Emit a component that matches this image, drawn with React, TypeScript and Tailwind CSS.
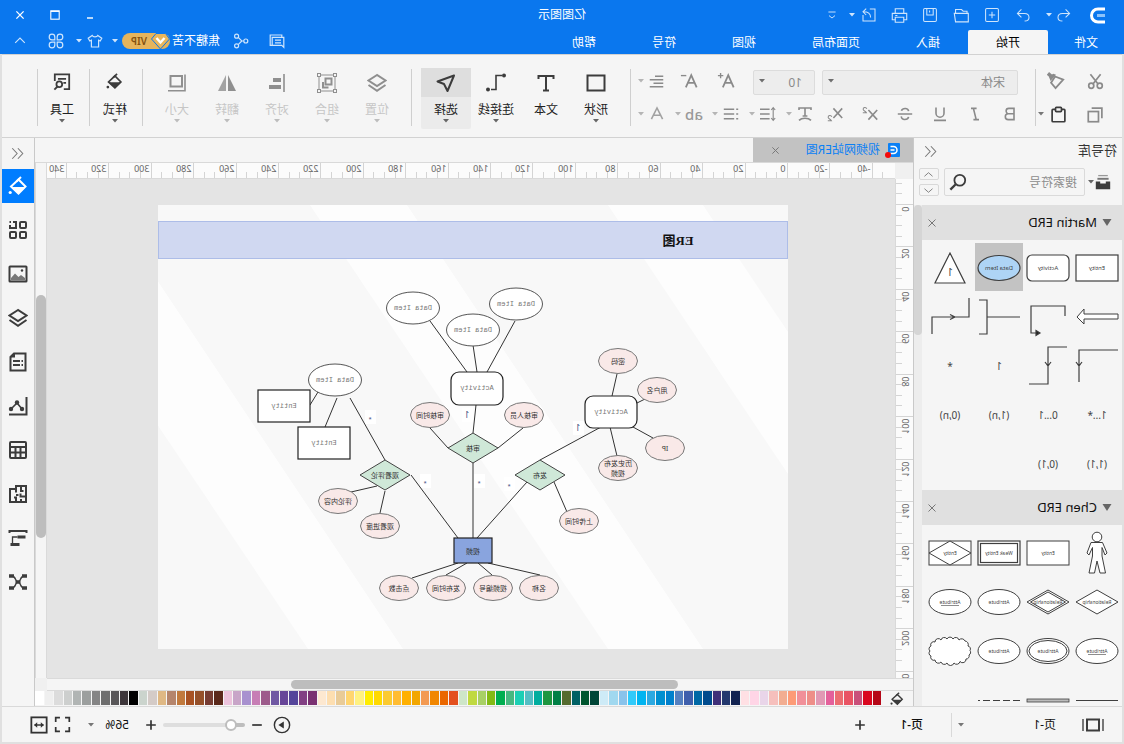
import { useState } from 'react';
import type { ReactNode } from 'react';
import clsx from 'clsx';

/* ---------- small helpers ---------- */

function Ico({ size = 20, sw = 2, className, children }: { size?: number; sw?: number; className?: string; children: ReactNode }) {
  return (
    <svg
      width={size}
      height={size}
      viewBox="0 0 20 20"
      fill="none"
      stroke="currentColor"
      strokeWidth={sw}
      className={clsx('shrink-0', className)}
      aria-hidden="true"
    >
      {children}
    </svg>
  );
}

function Caret({ className }: { className?: string }) {
  return (
    <svg width="6" height="4" viewBox="0 0 6 4" className={clsx('shrink-0', className)} aria-hidden="true">
      <path d="M0 0H6L3 3.6Z" fill="currentColor" />
    </svg>
  );
}

function IconButton({ label, className, children }: { label: string; className?: string; children: ReactNode }) {
  return (
    <button type="button" aria-label={label} className={clsx('flex shrink-0 items-center justify-center', className)}>
      {children}
    </button>
  );
}

const Divider = ({ className }: { className?: string }) => (
  <div className={clsx('mt-[14px] h-[57px] w-px shrink-0 bg-[#cfcfcf]', className)} />
);

const bucket = (
  <>
    <path d="M9.5 3.5L17 10.5L9.5 17.5L2.5 10.5Z" />
    <path d="M2.5 11H17L9.5 18Z" fill="currentColor" stroke="none" />
    <path d="M7 1L11.5 5.5" />
    <circle cx="17.8" cy="16.5" r="1.6" fill="currentColor" stroke="none" />
  </>
);

const layers = (
  <>
    <path d="M10 2L18.5 7.5L10 13L1.5 7.5Z" />
    <path d="M1.5 12L10 17.8L18.5 12" />
  </>
);

/* ---------- title bar ---------- */

const tabs = ['插入', '页面布局', '视图', '符号', '帮助'];

function TitleBar() {
  return (
    <header className="shrink-0 bg-[#0a77ee] text-white">
      <div className="grid h-[30px] grid-cols-[1fr_auto_1fr] items-center">
        <div className="flex items-center pl-[19px] text-[#cfe5fc]">
          <svg width="15" height="17" viewBox="0 0 15 17" fill="none" aria-hidden="true">
            <path d="M0 2H7A6.5 6.5 0 0 1 7 15H0" stroke="#fff" strokeWidth="3" />
            <path d="M0 8.5H8" stroke="#8cc2fa" strokeWidth="3" />
          </svg>
          <IconButton label="撤销" className="ml-[14px] w-6">
            <Ico size={16} sw={1.3}><path d="M8 3L3 8L8 13M3 8H12C16 8 17.5 10.5 17.5 13C17.5 16 15 17.5 12 17.5" /></Ico>
          </IconButton>
          <Caret />
          <IconButton label="重做" className="ml-[11px] w-6">
            <Ico size={16} sw={1.3}><path d="M12 3L17 8L12 13M17 8H8C4 8 2.5 10.5 2.5 13C2.5 16 5 17.5 8 17.5" /></Ico>
          </IconButton>
          <IconButton label="新建" className="ml-[3px] w-[31px]">
            <Ico size={16} sw={1.3}><rect x="2" y="2" width="16" height="16" rx="1.5" /><path d="M10 6V14M6 10H14" /></Ico>
          </IconButton>
          <IconButton label="打开" className="w-[31px]">
            <Ico size={17} sw={1.3}><path d="M2 7.500H16.500L18.500 7.500L17 17.500H2ZM3.500 7.500V5H8L10 3H17V7.500" /></Ico>
          </IconButton>
          <IconButton label="保存" className="w-[31px]">
            <Ico size={16} sw={1.3}><rect x="2" y="2" width="16" height="16" rx="1.5" /><path d="M6 2V10H14V2M10.5 4.5V7" /></Ico>
          </IconButton>
          <IconButton label="打印" className="w-[31px]">
            <Ico size={17} sw={1.3}><path d="M5 7V2H15V7M5 15H1.5V7.5H18.5V15H15" /><path d="M5 12H15V18H5ZM12.5 10H15" /></Ico>
          </IconButton>
          <IconButton label="导出" className="w-[29px]">
            <Ico size={16} sw={1.3}><path d="M9 2.5H2.5V17.5H17.5V10M8 13C8 8 11 6 17 6M13.5 2L17.5 6L13.5 10" /></Ico>
          </IconButton>
          <Caret />
          <IconButton label="自定义" className="ml-[5px] w-6">
            <Ico size={12} sw={1.6}><path d="M4 5H16M5 11L10 15L15 11" /></Ico>
          </IconButton>
        </div>
        <h1 className="text-xs">亿图图示</h1>
        <div className="flex justify-end pr-[3px]">
          <IconButton label="最小化" className="h-[30px] w-[35px]">
            <Ico size={12} sw={2.4}><path d="M5 15H15" /></Ico>
          </IconButton>
          <IconButton label="最大化" className="h-[30px] w-[35px]">
            <Ico size={12} sw={1.8}><rect x="3" y="3" width="14" height="14" /><path d="M3 4H17" /></Ico>
          </IconButton>
          <IconButton label="关闭" className="h-[30px] w-[35px]">
            <Ico size={12} sw={2.2}><path d="M4 4L16 16M16 4L4 16" /></Ico>
          </IconButton>
        </div>
      </div>

      <div className="flex h-6 items-stretch text-xs">
        <button type="button" className="w-[76px] pt-px">文件</button>
        <button type="button" className="w-20 rounded-t-xs bg-[#f5f5f5] pt-px text-black">开始</button>
        {tabs.map(t => (
          <button key={t} type="button" className="px-7 pt-px whitespace-nowrap">{t}</button>
        ))}
        <div className="ml-auto flex items-center pr-[3px] pb-[2px] text-[#cfe5fc]">
          <IconButton label="消息" className="w-9">
            <Ico size={16} sw={1.5}><path d="M4 5V2.5H18.5V15.500H16.500M1.5 5.500V18L4 15.5H16V5.5ZM5 9H12.500M5 12.3H12.500" /></Ico>
          </IconButton>
          <IconButton label="分享" className="mr-[3px] w-9">
            <Ico size={16} sw={1.5}><circle cx="4" cy="10" r="2.5" /><circle cx="15.5" cy="4" r="2.5" /><circle cx="15.5" cy="16" r="2.5" /><path d="M6.5 10H9L13.5 5.5M9 10L13.5 14.5" /></Ico>
          </IconButton>
          <span className="mr-[2px] text-white">焦糖不苦</span>
          <span className="mr-1 flex h-4 w-12 items-center rounded-full bg-[#e5b45c]">
            <svg width="19" height="16" viewBox="0 0 19 16" aria-hidden="true">
              <path d="M4.5 0.5H14L18.5 6L9.5 16L0.5 6Z" fill="#e9b65b" stroke="#0a77ee" />
              <path d="M5.5 5L9.5 9.5L13.5 5" fill="none" stroke="#fff" strokeWidth="2.4" />
            </svg>
            <span className="ml-1 text-[10px] leading-none font-semibold text-[#84520f]">VIP</span>
          </span>
          <Caret className="mr-1" />
          <IconButton label="皮肤" className="w-[26px]">
            <Ico size={16} sw={1.5}><path d="M6.5 3L1.5 6.5L3.5 10L5.5 9V17.5H14.5V9L16.5 10L18.5 6.5L13.5 3C12.5 5.5 7.5 5.5 6.5 3Z" /></Ico>
          </IconButton>
          <Caret className="mr-[2px]" />
          <IconButton label="应用" className="w-9">
            <Ico size={16} sw={1.5}>
              <path d="M8.5 8.5V5A3.5 3.5 0 1 0 5 8.5ZM11.5 8.5V5A3.5 3.5 0 1 1 15 8.5ZM8.5 11.5V15A3.5 3.5 0 1 1 5 11.5ZM11.5 11.5V15A3.5 3.5 0 1 0 15 11.5Z" />
            </Ico>
          </IconButton>
          <IconButton label="收起功能区" className="w-[35px]">
            <Ico size={12} sw={1.8}><path d="M2 13L10 5L18 13" /></Ico>
          </IconButton>
        </div>
      </div>
    </header>
  );
}

/* ---------- ribbon ---------- */

interface Tool {
  label: string;
  icon: ReactNode;
  caret?: boolean;
}

const drawTools: Tool[] = [
  { label: '形状', caret: true, icon: <rect x="1.5" y="2.5" width="17" height="15" /> },
  { label: '文本', icon: <path d="M2.5 6V3H17.5V6M10 3V18M7 17.5H13" /> },
  {
    label: '连接线',
    caret: true,
    icon: (
      <>
        <path d="M4 2.500H10V16.5H15" strokeWidth="1.600" />
        <circle cx="2" cy="2.500" r="2" fill="currentColor" stroke="none" />
        <circle cx="18" cy="16.5" r="2" fill="currentColor" stroke="none" />
      </>
    ),
  },
  { label: '选择', caret: true, icon: <path d="M2 2.5L18.5 8.5L12 11L8.5 18Z" strokeLinejoin="round" /> },
];

const arrangeTools: Tool[] = [
  { label: '位置', icon: layers },
  {
    label: '组合',
    icon: (
      <g strokeWidth="1.4">
        <rect x="2" y="2" width="16" height="16" strokeWidth="1" />
        <rect x="5.5" y="5.5" width="6" height="6" strokeWidth="2" />
        <path d="M14 9V14.5H8.5" strokeWidth="2" />
        <g fill="#f5f5f5" strokeWidth="1">
          <rect x="0.5" y="0.5" width="3" height="3" />
          <rect x="16.5" y="0.5" width="3" height="3" />
          <rect x="0.5" y="16.5" width="3" height="3" />
          <rect x="16.5" y="16.5" width="3" height="3" />
        </g>
      </g>
    ),
  },
  { label: '对齐', icon: <><path d="M3 1V19" strokeWidth="1.6" /><path d="M6 7H14M6 14H18" strokeWidth="4" /></> },
  { label: '翻转', icon: <><path d="M9 2V18H1Z" fill="currentColor" stroke="none" /><path d="M11 2V18H19Z" fill="currentColor" stroke="none" opacity="0.8" /></> },
  { label: '大小', icon: <><rect x="5" y="3" width="11.5" height="10.5" /><path d="M2 1.5V17.8H19" strokeWidth="1.6" /></> },
];

function ToolButton({ tool, active, disabled }: { tool: Tool; active?: boolean; disabled?: boolean }) {
  return (
    <button
      type="button"
      disabled={disabled}
      className={clsx(
        'mt-[13px] flex h-[61px] w-[50px] shrink-0 flex-col items-center rounded-xs',
        disabled ? 'text-[#8f8f8f]' : 'text-[#3c3c3c]',
        active && 'bg-[#ebebeb]'
      )}
    >
      <span className={clsx('flex h-[29px] w-full items-center justify-center', active && 'bg-[#dedede]')}>
        <Ico>{tool.icon}</Ico>
      </span>
      <span className={clsx('mt-[5px] text-xs leading-4 whitespace-nowrap', disabled ? 'text-[#c6c6c6]' : 'text-[#222]')}>{tool.label}</span>
      {(tool.caret || disabled) && <Caret className={clsx('mt-px', disabled ? 'text-[#bdbdbd]' : 'text-[#666]')} />}
    </button>
  );
}

const textButtons = [
  { label: '加粗', icon: <path d="M5 3H11.5A3.3 3.3 0 0 1 11.5 9.7H5ZM5 9.7H12.2A3.5 3.5 0 0 1 12.2 17H5Z" /> },
  { label: '斜体', icon: <path d="M8 3H15M5 17H12M12 3L8.5 17" /> },
  { label: '下划线', icon: <path d="M5 2V9A5 5 0 0 0 15 9V2M2.5 18H17.5" /> },
  { label: '删除线', icon: <path d="M14.5 6C13 2 6 2 5.5 6.5M1 10H19M5.5 13.5C6.5 18 15 18 14.5 13" /> },
  {
    label: '上标',
    icon: <><path d="M1 5L12 17M12 5L1 17" /><path d="M14 3.5C15 1 19 1.500 18.500 4.5C18 6 15.5 6.5 14.5 8.500H19" strokeWidth="1.3" /></>,
  },
  {
    label: '下标',
    icon: <><path d="M1 3L12 15M12 3L1 15" /><path d="M14 13.5C15 11 19 11.500 18.500 14.5C18 16 15.5 16.5 14.5 18.500H19" strokeWidth="1.3" /></>,
  },
];

const textMenus = [
  { label: '文字方向', icon: <path d="M2.5 5V2.5H17.5V5M10 2.5V13M7 12.5H13M2.5 18C6 14.5 14 14.5 17.5 18" /> },
  { label: '行距', icon: <><path d="M8 4H20M8 10H20M8 16H20" /><path d="M3.5 2V18M1 5L3.5 2L6 5M1 15L3.5 18L6 15" strokeWidth="1.4" /></> },
  { label: '项目符号', icon: <><path d="M6 4H19M6 10H19M6 16H19" /><path d="M1 4H3.5M1 10H3.5M1 16H3.5" /></> },
];

function TextMenu({ label, children }: { label: string; children: ReactNode }) {
  return (
    <button type="button" aria-label={label} className="flex h-[26px] w-[37px] shrink-0 items-center gap-1 pl-[3px]">
      <span className="flex w-[18px] justify-center">{children}</span>
      <Caret className="text-[#b5b5b5]" />
    </button>
  );
}

function Ribbon() {
  return (
    <section className="flex h-[84px] shrink-0 overflow-hidden border-y border-[#d2d2d2] bg-[#f5f5f5]" aria-label="开始">
      <div className="mt-[13px] flex flex-col gap-[7px] pl-[6px] text-[#8a8a8a]">
        <div className="flex h-[26px] items-center">
          <IconButton label="剪切" className="w-10">
            <Ico size={17}><circle cx="5" cy="15" r="3" /><circle cx="15" cy="15" r="3" /><path d="M4 1.5L13 13M16 1.5L7 13" /></Ico>
          </IconButton>
          <IconButton label="格式刷" className="w-10">
            <Ico size={18}><path d="M2 8.500L11 5L15.500 12L10.500 18Z" /><path d="M10 3L16 10L18 5L13 2Z" fill="currentColor" stroke="none" /><path d="M15 5L19 1.500" strokeWidth="4" /></Ico>
          </IconButton>
        </div>
        <div className="flex h-[26px] items-center">
          <IconButton label="复制" className="w-10">
            <Ico size={17}><path d="M14.5 2.5H2.5V14.5" /><rect x="6.5" y="6.5" width="12" height="12" /></Ico>
          </IconButton>
          <button type="button" aria-label="粘贴" className="flex w-10 items-center justify-end gap-[6px] pr-0.5 text-[#3c3c3c]">
            <Ico size={17}><rect x="2.5" y="4" width="15" height="14.5" rx="1" /><rect x="6.5" y="1.5" width="7" height="5" rx="1" fill="#f5f5f5" /></Ico>
            <Caret className="text-[#777]" />
          </button>
        </div>
      </div>
      <Divider />

      <div className="mt-[13px] ml-[7px] flex flex-col gap-[7px] text-[#8a8a8a]">
        <div className="flex h-[26px] items-center pl-[10px]">
          <div className="relative h-[25px] w-[196px]">
            <select aria-label="字体" className="h-full w-full appearance-none rounded-xs border border-[#dcdcdc] bg-[#ededed] pl-3 text-xs text-[#8a8a8a]">
              <option>宋体</option>
            </select>
            <Caret className="pointer-events-none absolute top-[10px] right-[6px] text-[#6e6e6e]" />
          </div>
          <div className="relative ml-[7px] h-[25px] w-[62px]">
            <select aria-label="字号" defaultValue="10" className="h-full w-full appearance-none rounded-xs border border-[#dcdcdc] bg-[#ededed] pl-3 text-xs text-[#8a8a8a]">
              <option>10</option>
            </select>
            <Caret className="pointer-events-none absolute top-[10px] right-[6px] text-[#6e6e6e]" />
          </div>
          <IconButton label="增大字号" className="ml-2 w-[37px]">
            <Ico size={18}><path d="M1.5 17L7.5 3.500L13.5 17M4 12H11" /><path d="M13 4H19M16 1V7" strokeWidth="1.5" /></Ico>
          </IconButton>
          <IconButton label="减小字号" className="w-[37px]">
            <Ico size={18}><path d="M1.5 17L7.5 3.500L13.5 17M4 12H11" /><path d="M13 4H19" strokeWidth="1.5" /></Ico>
          </IconButton>
          <div className="ml-[2px]">
            <TextMenu label="对齐方式">
              <Ico size={15}><path d="M1 3H12M1 7.700H19M1 12.300H14M1 17H19" /></Ico>
            </TextMenu>
          </div>
        </div>
        <div className="flex h-[26px] items-center">
          {textButtons.map(b => (
            <IconButton key={b.label} label={b.label} className="w-[35px]">
              <Ico size={16}>{b.icon}</Ico>
            </IconButton>
          ))}
          <div className="ml-px flex">
            {textMenus.map(b => (
              <TextMenu key={b.label} label={b.label}>
                <Ico size={16}>{b.icon}</Ico>
              </TextMenu>
            ))}
            <TextMenu label="突出显示">
              <span className="text-[15px] leading-none font-medium text-[#999]">ab</span>
            </TextMenu>
            <TextMenu label="字体颜色">
              <Ico size={16} className="text-[#a2a2a2]"><path d="M3 16.500L10 2.500L17 16.500M5.5 11.5H14.5" /></Ico>
            </TextMenu>
          </div>
        </div>
      </div>
      <Divider className="ml-px" />

      <div className="ml-[9px] flex">
        {drawTools.map(t => (
          <ToolButton key={t.label} tool={t} active={t.label === '选择'} />
        ))}
      </div>
      <Divider className="ml-[9px]" />
      <div className="ml-[9px] flex">
        {arrangeTools.map(t => (
          <ToolButton key={t.label} tool={t} disabled />
        ))}
      </div>
      <Divider className="ml-[9px]" />
      <div className="ml-[2px] flex">
        <ToolButton tool={{ label: '样式', caret: true, icon: <g transform="translate(2 0) scale(0.85)">{bucket}</g> }} />
      </div>
      <Divider />
      <div className="ml-[2px] flex">
        <ToolButton
          tool={{
            label: '工具',
            caret: true,
            icon: (
              <g transform="translate(1 0) scale(0.9)">
                <path d="M8 18H2V1.500H18V9M5.5 6.5H14.5M5.5 11H8.500" />
                <circle cx="13" cy="12.5" r="3.2" />
                <path d="M15 15L18.5 18.5" />
              </g>
            ),
          }}
        />
      </div>
      <Divider className="-ml-px" />
    </section>
  );
}

/* ---------- symbol library ---------- */

function Cell({ selected, name, children }: { selected?: boolean; name: string; children?: ReactNode }) {
  return (
    <button type="button" aria-label={name} className="flex h-[49px] items-start">
      <svg
        width="48"
        height="48"
        viewBox="0 0 48 48"
        className={clsx('shrink-0', selected && 'bg-[#c3c3c3]')}
        fill="#fff"
        stroke="#3f3f3f"
        strokeWidth="1.2"
      >
        {children}
      </svg>
    </button>
  );
}

function Tiny({ children, y = 27, size = 6 }: { children: ReactNode; y?: number; size?: number }) {
  return (
    <text x="24" y={y} fontSize={size} textAnchor="middle" fill="#444" stroke="none">{children}</text>
  );
}

const cardinalities = ['1', '*', '1...*', '0...1', '(1,n)', '(0,n)', '(1,1)', '(0,1)'];

function SectionHeader({ title }: { title: string }) {
  return (
    <div className="flex h-[35px] items-center bg-[#e0e0e0] pr-[5px] pl-[10px]">
      <button type="button" className="flex items-center gap-[5px] text-[13px] text-[#111]">
        <svg width="10" height="7" viewBox="0 0 10 7" aria-hidden="true"><path d="M0.5 0H9.5L5 7Z" fill="#666" /></svg>
        {title}
      </button>
      <IconButton label={`关闭 ${title}`} className="ml-auto w-[10px] text-[#777]">
        <Ico size={10} sw={2}><path d="M3 3L17 17M17 3L3 17" /></Ico>
      </IconButton>
    </div>
  );
}

function SymbolPanel() {
  return (
    <aside className="flex w-[209px] shrink-0 flex-col border-r border-[#c9c9c9] bg-[#f5f5f5]">
      <div className="flex h-[30px] items-center justify-between pr-[9px] pb-1 pl-[5px]">
        <h2 className="text-[13px] text-[#333]">符号库</h2>
        <IconButton label="折叠" className="text-[#777]">
          <Ico size={15} sw={1.4}><path d="M9.5 3L3 10L9.5 17M17 3L10.5 10L17 17" /></Ico>
        </IconButton>
      </div>
      <div className="mb-[9px] flex h-7 items-center pl-[11px]">
        <IconButton label="符号库菜单" className="w-4 text-[#3c3c3c]">
          <Ico size={16}><path d="M4 2H16" strokeWidth="1.6" stroke="#999" /><path d="M3 6H17" strokeWidth="2.4" stroke="#777" /><path d="M1 9.500H6.5V12H13.5V9.500H19V19H1Z" fill="currentColor" stroke="none" /></Ico>
        </IconButton>
        <Caret className="ml-px text-[#666]" />
        <div className="ml-[3px] flex h-7 w-[141px] items-center rounded-xs border border-[#dadada] pr-1">
          <input type="text" aria-label="搜索符号" placeholder="搜索符号" className="h-full w-full min-w-0 bg-transparent pl-[7px] text-xs outline-none placeholder:text-[#8c8c8c]" />
          <IconButton label="搜索" className="w-[18px] pb-px text-[#3c3c3c]">
            <Ico size={18}><circle cx="8" cy="8" r="6" /><path d="M12.5 12.5L18.5 18.5" strokeWidth="2.6" /></Ico>
          </IconButton>
        </div>
        <div className="ml-[5px] flex flex-col gap-1 text-[#777]">
          <IconButton label="上一个" className="h-3 w-5 rounded-xs border border-[#d8d8d8]">
            <Ico size={9} sw={2}><path d="M1 14L10 6L19 14" /></Ico>
          </IconButton>
          <IconButton label="下一个" className="h-3 w-5 rounded-xs border border-[#d8d8d8]">
            <Ico size={9} sw={2}><path d="M1 6L10 14L19 6" /></Ico>
          </IconButton>
        </div>
      </div>

      <div className="flex min-h-0 flex-1">
        <div className="min-w-0 flex-1 overflow-hidden">
          <SectionHeader title="Martin ERD" />
          <div className="grid grid-cols-4 pt-[3px] pr-[3px] pb-[2px] pl-px">
            <Cell name="Entity"><rect x="3" y="12" width="42" height="26" /><Tiny>Entity</Tiny></Cell>
            <Cell name="Activity"><rect x="3" y="12" width="42" height="26" rx="5" /><Tiny>Activity</Tiny></Cell>
            <Cell name="Data Item" selected>
              <ellipse cx="24" cy="25" rx="21" ry="12.5" fill="#aed4f5" /><Tiny>Data Item</Tiny>
            </Cell>
            <Cell name="Indicator"><path d="M24 10L39 40H9Z" /><Tiny y={33} size={10}>1</Tiny></Cell>

            <Cell name="Arrow"><path d="M3 22H37V17L44 25L37 32V27H3Z" strokeWidth="1" /></Cell>
            <Cell name="Link 1">
              <path d="M7 24V14H41V41H33" fill="none" /><path d="M36 38.5L32 41L36 43.5Z" fill="#222" />
            </Cell>
            <Cell name="Link 2"><path d="M3 25H36M44 8H36V42H44" fill="none" /></Cell>
            <Cell name="Link 3"><path d="M5 6V25H42V42M24 22.5L19 25L24 27.5" fill="none" /></Cell>

            <Cell name="Link 4"><path d="M3 9H42V41M39 21L42 25L45 21" fill="none" /></Cell>
            <Cell name="Link 5"><path d="M5 6H24V43H43M21 21L24 25L27 21" fill="none" /></Cell>
            {cardinalities.map(c => (
              <Cell key={c} name={c}><Tiny y={29} size={10}>{c}</Tiny></Cell>
            ))}
          </div>

          <SectionHeader title="Chen ERD" />
          <div className="grid grid-cols-4 pt-[3px] pr-[3px] pl-px">
            <Cell name="Actor">
              <g strokeWidth="1">
                <circle cx="24" cy="9" r="4.800" />
                <path d="M18.5 14.5H30L34 25L32 27L28.500 19.5V28L32 45H26.5L24 33L21 45H15.500L19 28V19.5L16 27L14 25Z" />
              </g>
            </Cell>
            <Cell name="Entity"><rect x="3" y="13" width="42" height="24" strokeWidth="1" /><Tiny size={5}>Entity</Tiny></Cell>
            <Cell name="Weak Entity"><rect x="3" y="13" width="42" height="24" /><rect x="5.5" y="15.5" width="37" height="19" /><Tiny size={5}>Weak Entity</Tiny></Cell>
            <Cell name="Associative Entity"><rect x="3" y="13" width="42" height="24" strokeWidth="1" /><path d="M3 25L24 13L45 25L24 37Z" strokeWidth="1" /><Tiny size={5}>Entity</Tiny></Cell>

            <Cell name="Relationship"><path d="M3 25L24 13L45 25L24 37Z" strokeWidth="1" /><Tiny size={5}>Relationship</Tiny></Cell>
            <Cell name="Weak Relationship"><path d="M3 25L24 13L45 25L24 37ZM6.5 25L24 15L41.5 25L24 35Z" strokeWidth="1" /><Tiny size={5}>Relationship</Tiny></Cell>
            <Cell name="Attribute"><ellipse cx="24" cy="25" rx="21" ry="12.5" strokeWidth="1" /><Tiny size={5}>Attribute</Tiny></Cell>
            <Cell name="Key Attribute"><ellipse cx="24" cy="25" rx="21" ry="12.5" strokeWidth="1" /><Tiny size={5}>Attribute</Tiny><path d="M15 28.5H33" strokeWidth="0.6" /></Cell>

            <Cell name="Weak Key Attribute"><ellipse cx="24" cy="25" rx="21" ry="12.5" strokeWidth="1" /><Tiny size={5}>Attribute</Tiny><path d="M15 28.5H33" strokeWidth="0.6" /></Cell>
            <Cell name="Multivalue Attribute"><ellipse cx="24" cy="25" rx="21" ry="12.5" strokeWidth="1" /><ellipse cx="24" cy="25" rx="19" ry="10.5" strokeWidth="1" /><Tiny size={5}>Attribute</Tiny></Cell>
            <Cell name="Derived Attribute"><ellipse cx="24" cy="25" rx="21" ry="12.5" strokeWidth="1" /><Tiny size={5}>Attribute</Tiny></Cell>
            <Cell name="Cloud">
              <path
                strokeWidth="1"
                d="M6 20A3.600 3.600 0 0 1 9 15A3.600 3.600 0 0 1 15 14A3.300 3.300 0 0 1 21 13A3.300 3.300 0 0 1 27 13A3.300 3.300 0 0 1 33 14A3.300 3.300 0 0 1 39 16A3 3 0 0 1 43 20A3 3 0 0 1 44 25A3 3 0 0 1 43 30A3 3 0 0 1 39 34A3.400 3.400 0 0 1 33 36A3.400 3.400 0 0 1 27 37A3.700 3.700 0 0 1 20 37A3.400 3.400 0 0 1 14 35.5A3.400 3.400 0 0 1 8 33A3 3 0 0 1 5 29A3 3 0 0 1 4 24.5A3 3 0 0 1 6 20Z"
              />
            </Cell>

            <Cell name="Line"><path d="M3 25.5H45" /></Cell>
            <Cell name="Double Line"><rect x="3" y="24" width="42" height="3" fill="#bbb" strokeWidth="0.8" /></Cell>
            <Cell name="Dashed Line"><path d="M3 25.5H45" strokeDasharray="7 3" /></Cell>
          </div>
        </div>
        <div className="w-2 shrink-0 bg-[#ededed]">
          <div className="h-[130px] rounded-full bg-[#d5d5d5]" />
        </div>
      </div>
    </aside>
  );
}

/* ---------- rulers ---------- */

const MM = 2.121;

const steps = (from: number, to: number) => Array.from({ length: (to - from) / 5 + 1 }, (_, i) => from + i * 5);

function HRuler() {
  return (
    <svg className="h-4 w-full bg-[#fbfbfb]" aria-hidden="true">
      {steps(-45, 345).map(t => {
        const x = Math.round(107 + t * MM) + 0.5;
        const major = t % 20 === 0;
        return (
          <g key={t}>
            <path d={`M${x} ${major ? 0 : 9}V16`} stroke="#d4d4d4" />
            {major && <text x={x + 2} y="9" fontSize="9" fill="#666">{t}</text>}
          </g>
        );
      })}
      <path d="M0 15.5H4000" stroke="#d9d9d9" />
    </svg>
  );
}

function VRuler() {
  return (
    <svg className="h-full w-[18px] bg-[#fbfbfb]" aria-hidden="true">
      {steps(-10, 220).map(t => {
        const y = Math.round(25 + t * MM) + 0.5;
        const major = t % 20 === 0;
        return (
          <g key={t}>
            <path d={`M${major ? 0 : 11} ${y}H18`} stroke="#d4d4d4" />
            {major && <text transform={`translate(11 ${y + 2}) rotate(-90)`} textAnchor="end" fontSize="9" fill="#666">{t}</text>}
          </g>
        );
      })}
      <path d="M17.5 0V4000" stroke="#d9d9d9" />
    </svg>
  );
}

/* ---------- diagram ---------- */

const links = [
  [358, 116, 321, 167], [315, 140, 311, 167], [273, 116, 301, 167], [312, 200, 315, 228],
  [358, 223, 340, 243], [265, 223, 290, 243], [315, 258, 315, 333], [377, 270, 330, 333],
  [261, 277, 311, 333], [187, 222, 248, 255], [171, 169, 176, 191], [143, 194, 151, 198],
  [155, 222, 135, 233], [178, 222, 171, 251], [234, 277, 221, 307], [330, 358, 376, 373],
  [321, 358, 342, 370], [310, 358, 296, 370], [300, 358, 248, 370], [438, 193, 403, 255],
  [451, 193, 463, 222], [470, 187, 478, 200], [411, 281, 437, 287], [403, 286, 408, 308],
];

const dataItems = [[375, 103], [315, 125], [272, 99], [453, 175]];

const boxes = [
  { x: 285, y: 167, h: 33, r: 8, text: 'Activity' },
  { x: 151, y: 191, h: 32, r: 8, text: 'Activity' },
  { x: 478, y: 185, h: 32, r: 0, text: 'Entity' },
  { x: 438, y: 222, h: 32, r: 0, text: 'Entity' },
];

const attrs: [number, number, string[]][] = [
  [358, 210, ['审核时间']],
  [264, 210, ['审核人员']],
  [170, 156, ['密码']],
  [131, 185, ['用户名']],
  [123, 243, ['IP']],
  [170, 263, ['历史发布', '视频']],
  [209, 316, ['上传时间']],
  [450, 296, ['评论内容']],
  [408, 321, ['观看进度']],
  [389, 383, ['点击数']],
  [342, 383, ['发布时间']],
  [295, 383, ['视频编号']],
  [249, 383, ['名称']],
];

const relations: [number, number, string][] = [
  [315, 243, '审核'],
  [248, 270, '发布'],
  [403, 270, '观看评论'],
];

const marks: [number, number, string][] = [
  [321, 210, '1'], [210, 223, '1'], [418, 212, '*'], [363, 276, '*'], [309, 276, '*'], [279, 279, '*'],
];

function Diagram() {
  return (
    <svg width="630" height="444" viewBox="0 0 630 444" className="mt-[26px] ml-[107px] block bg-[#f8f8f8]" textAnchor="middle" role="img" aria-label="ER图">
      <g fill="#fdfdfd">
        <path d="M85 0H180L-117 444H-212Z" />
        <path d="M381 0H478L180 444H85Z" />
        <path d="M681 0H778L480 444H385Z" />
      </g>
      <rect x="0.5" y="16.5" width="629" height="37" fill="#d0d8f1" stroke="#adbde8" />
      <text x="110" y="40" fontSize="13" fontWeight="700" fill="#111" fontFamily="Liberation Serif, Noto Sans CJK SC, serif">ER图</text>

      {marks.map(([x, y]) => (
        <rect key={`${x}-${y}`} x={x - 6} y={y - 7} width="11" height="14" fill="#fff" />
      ))}
      <g stroke="#333">
        {links.map(([x1, y1, x2, y2]) => (
          <line key={`${x1}-${y1}-${x2}`} x1={x1} y1={y1} x2={x2} y2={y2} />
        ))}
      </g>
      {marks.map(([x, y, t]) => (
        <text key={`${x}-${y}`} x={x} y={t === '1' ? y + 3 : y + 4} fontSize={t === '1' ? 8 : 6} fill="#3b4a7a">{t}</text>
      ))}

      <g fontFamily="Liberation Mono, monospace" fontSize="7">
        {dataItems.map(([x, y]) => (
          <g key={x}>
            <ellipse cx={x} cy={y} rx="26.5" ry="16" fill="#fff" stroke="#555" />
            <text x={x} y={y + 2} fill="#777">Data Item</text>
          </g>
        ))}
        {boxes.map(b => (
          <g key={b.x}>
            <rect x={b.x} y={b.y} width="52" height={b.h} rx={b.r} fill="#fff" stroke="#222" strokeWidth="1.2" />
            <text x={b.x + 26} y={b.y + 18} fill="#777">{b.text}</text>
          </g>
        ))}
      </g>

      <g fontSize="7" fill="#333">
        {attrs.map(([x, y, lines]) => (
          <g key={`${x}-${y}`}>
            <ellipse cx={x} cy={y} rx="19.5" ry="12.5" fill="#f9e9e8" stroke="#777" />
            {lines.map((l, i) => (
              <text key={l} x={x} y={y + 3 + (i * 10 - (lines.length - 1) * 5)}>{l}</text>
            ))}
          </g>
        ))}
        {relations.map(([x, y, t]) => (
          <g key={t}>
            <path d={`M${x - 25} ${y}L${x} ${y - 15}L${x + 25} ${y}L${x} ${y + 15}Z`} fill="#cfe8d8" stroke="#444" />
            <text x={x} y={y + 3}>{t}</text>
          </g>
        ))}
        <rect x="296" y="333" width="38" height="25" fill="#89a4de" stroke="#222" strokeWidth="1.2" />
        <text x="315" y="349">视频</text>
      </g>
    </svg>
  );
}

/* ---------- colour strip ---------- */

const palette = [
  '#b50717', '#d9071f', '#c9507a', '#e95464', '#ec6d71', '#e4609b', '#e198b4', '#ee8e88', '#f19099', '#fd9b77',
  '#f2ad91', '#f6bfbc', '#e9d5e9', '#ffd5e6', '#ffe0e4', '#112250', '#24386e', '#3f2f78', '#004b8d', '#0068a5',
  '#3f5fac', '#5580c0', '#0080cc', '#008fd0', '#2ca9e1', '#00b4f0', '#30cafa', '#89c3eb', '#a0d8ef', '#ceebf7',
  '#004536', '#00552e', '#006064', '#556b2f', '#007f45', '#1e9640', '#00ad9e', '#54bec4', '#1ccfb4', '#47b880',
  '#00ae50', '#83ba15', '#a8d065', '#c0d940', '#cee6c8', '#e3501e', '#ea6700', '#f18600', '#f39a52', '#f2a600',
  '#ffb000', '#ffbc32', '#fbca30', '#ffd900', '#ffec00', '#fff180', '#ffd56f', '#e9cb97', '#fddeb0', '#fde8d0',
  '#7a3172', '#824083', '#55459a', '#674598', '#7058a3', '#9d5b8b', '#c77eb5', '#a891cf', '#c8a5c8', '#ecc3dc',
  '#5a281a', '#763c32', '#955029', '#a85223', '#c17a3e', '#b5856c', '#dfb884', '#d4cbc7', '#cbd4cd', '#000000',
  '#3d363a', '#595759', '#6e6e6e', '#858585', '#9c9f9e', '#b1b5b4', '#cdcfce', '#dcdcdc', '#efefef', '#ffffff',
];

function ColorStrip() {
  return (
    <div className="flex h-[15px] shrink-0 items-stretch bg-[#f5f5f5]">
      <IconButton label="填充颜色" className="w-8 text-[#3c3c3c]">
        <Ico size={14}>{bucket}</Ico>
      </IconButton>
      <div className="flex flex-1 gap-px pr-px">
        {palette.map(c => (
          <button key={c} type="button" aria-label={c} className="h-[14px] flex-1" style={{ backgroundColor: c }} />
        ))}
      </div>
    </div>
  );
}

/* ---------- workspace ---------- */

function Workspace() {
  return (
    <main className="flex min-w-0 flex-1 flex-col">
      <div className="flex h-[25px] shrink-0 border-b border-[#d9d9d9] bg-[#f5f5f5]">
        <div className="flex w-40 items-center bg-[#c2c2c2] pl-3">
          <svg width="18" height="16" viewBox="0 0 18 16" aria-hidden="true">
            <rect x="1" y="1" width="12" height="14" rx="1" fill="#0a80f5" />
            <path d="M10.5 4.500H7.5A3.5 3.5 0 0 0 7.5 11.500H10.500M6.500 8H10.500" fill="none" stroke="#fff" strokeWidth="1.5" />
            <circle cx="13" cy="13" r="3" fill="#f40a0a" />
          </svg>
          <button type="button" className="ml-[3px] text-xs whitespace-nowrap text-[#0a80f5]">视频网站ER图</button>
          <IconButton label="关闭文档" className="mr-[18px] ml-auto text-[#777]">
            <Ico size={9} sw={2.2}><path d="M3 3L17 17M17 3L3 17" /></Ico>
          </IconButton>
        </div>
      </div>

      <div className="grid min-h-0 flex-1 grid-cols-[18px_minmax(0,1fr)_12px] grid-rows-[16px_minmax(0,1fr)_13px]">
        <div className="bg-[#f0f0f0]" />
        <HRuler />
        <div className="row-span-2 border-x border-[#dadada] bg-[#f5f5f5] pt-[132px]">
          <div className="h-[243px] w-[10px] rounded-full bg-[#bdbdbd]" />
        </div>
        <div className="overflow-hidden"><VRuler /></div>
        <div className="overflow-hidden bg-[#e4e4e4]">
          <Diagram />
        </div>
        <div className="col-span-2 border-y border-[#dadada] bg-[#f5f5f5] pt-px pl-[235px]">
          <div className="h-[9px] w-[387px] rounded-full bg-[#bdbdbd]" />
        </div>
        <div className="bg-[#f0f0f0]" />
      </div>

      <ColorStrip />
    </main>
  );
}

/* ---------- right side bar ---------- */

const sideItems: { label: string; icon: ReactNode }[] = [
  { label: '填充', icon: bucket },
  {
    label: '符号',
    icon: <><rect x="2" y="2" width="6" height="6" rx="1" /><path d="M15 2H12V8H18V5M17 2H18.5" /><rect x="2" y="12" width="6" height="6" rx="1" /><rect x="12" y="12" width="6" height="6" rx="1" /></>,
  },
  {
    label: '图片',
    icon: <><rect x="1.5" y="2.5" width="17" height="15" rx="0.5" /><path d="M3 16.5V14L7 11L9.5 13L13 9.5L17 14V16.5Z" fill="#777" stroke="none" /><circle cx="6" cy="6.5" r="1.2" fill="currentColor" stroke="none" /></>,
  },
  { label: '图层', icon: layers },
  {
    label: '属性',
    icon: <><path d="M2.5 1.5H14L17.5 5V18.5H2.5Z" /><path d="M5 9H6.500M5 13H6.500M8 9H15M8 13H15" /><path d="M13 1V5.500H18Z" fill="currentColor" stroke="none" /></>,
  },
  {
    label: '图表',
    icon: (
      <>
        <path d="M1.5 1V18.5H19" />
        <path d="M6 13L11 7L17 13" strokeWidth="1.6" />
        <g fill="currentColor" stroke="none"><circle cx="6" cy="13" r="2.2" /><circle cx="11" cy="6.5" r="2.2" /><circle cx="17" cy="13" r="2.2" /></g>
      </>
    ),
  },
  { label: '表格', icon: <><rect x="2" y="2" width="16" height="16" rx="1" /><path d="M2 7H18M2 12.5H18M7.5 7V18M12.5 7V18" /></> },
  {
    label: '平面图',
    icon: <path d="M2 2H12V5H18V18H2ZM7 2V7H4.500M2 12.500H7.500V9.500M7 15V18M12 18V13.5H14M12 5V8.5M12 11H9.500" />,
  },
  { label: '甘特图', icon: <><path d="M1.500 5V3H18.500V5" /><path d="M2.500 9H10.500M8.500 16.5H17.500" strokeWidth="3" /><path d="M10.500 9H15.5V15" strokeWidth="1.3" /></> },
  {
    label: '思维导图',
    icon: (
      <>
        <path d="M4 4C8 4 7 10 10 10C13 10 12 4 16 4M4 16C8 16 7 10 10 10C13 10 12 16 16 16" strokeWidth="1.4" />
        <g strokeWidth="3.6"><path d="M1 4H6M14 4H19M1 16H6M14 16H19M7.5 10H12.5" /></g>
      </>
    ),
  },
];

function SideBar() {
  const [active, setActive] = useState('填充');
  return (
    <nav className="flex w-[33px] shrink-0 flex-col border-l border-[#c9c9c9] bg-[#f5f5f5]" aria-label="面板">
      <IconButton label="展开" className="h-[31px] text-[#777]">
        <Ico size={15} sw={1.4}><path d="M9.5 3L3 10L9.5 17M17 3L10.5 10L17 17" /></Ico>
      </IconButton>
      <div className="flex flex-col gap-[10px]">
        {sideItems.map(item => (
          <button
            key={item.label}
            type="button"
            aria-label={item.label}
            onClick={() => setActive(item.label)}
            className={clsx('flex h-[34px] items-center justify-center', active === item.label ? 'bg-[#007dff] text-white' : 'text-[#3c3c3c]')}
          >
            <Ico>{item.icon}</Ico>
          </button>
        ))}
      </div>
    </nav>
  );
}

/* ---------- status bar ---------- */

function StatusBar() {
  const [zoom, setZoom] = useState(56);
  return (
    <footer className="flex h-9 shrink-0 items-center border-t border-[#d9d9d9] bg-[#f5f5f5] text-xs text-[#111]">
      <IconButton label="页面视图" className="ml-[17px] w-6 text-[#3c3c3c]">
        <svg width="24" height="16" viewBox="0 0 24 16" fill="none" stroke="currentColor" strokeWidth="2" aria-hidden="true">
          <rect x="6" y="2.5" width="12" height="11" /><path d="M2 2V14M22 2V14" stroke="#777" />
        </svg>
      </IconButton>
      <button type="button" className="ml-[25px] flex w-[104px] items-center justify-between pr-[6px]">
        页-1
        <Caret className="text-[#777]" />
      </button>
      <div className="h-6 w-px bg-[#d9d9d9]" />
      <button type="button" className="ml-7 font-medium">页-1</button>
      <IconButton label="添加页面" className="ml-7 w-6 text-[#333]">
        <Ico size={12} sw={2.8}><path d="M10 2V18M2 10H18" /></Ico>
      </IconButton>

      <div className="ml-auto flex items-center pr-7 text-[#333]">
        <IconButton label="播放" className="w-[18px]">
          <Ico size={18} sw={1.6}><circle cx="10" cy="10" r="8.5" /><path d="M8 6L14 10L8 14Z" fill="currentColor" stroke="none" /></Ico>
        </IconButton>
        <IconButton label="缩小" className="ml-[10px] w-3">
          <Ico size={12} sw={2.8}><path d="M2 10H18" /></Ico>
        </IconButton>
        <input
          type="range"
          aria-label="缩放"
          min={10}
          max={400}
          value={zoom}
          onChange={e => setZoom(Number(e.target.value))}
          className="mx-[6px] h-1 w-[82px] appearance-none rounded-full bg-[linear-gradient(to_right,#bdbdbd_14px,#dedede_14px)] [&::-webkit-slider-thumb]:h-3 [&::-webkit-slider-thumb]:w-3 [&::-webkit-slider-thumb]:appearance-none [&::-webkit-slider-thumb]:rounded-full [&::-webkit-slider-thumb]:border-2 [&::-webkit-slider-thumb]:border-[#bdbdbd] [&::-webkit-slider-thumb]:bg-white"
        />
        <IconButton label="放大" className="w-3">
          <Ico size={12} sw={2.8}><path d="M10 2V18M2 10H18" /></Ico>
        </IconButton>
        <button type="button" className="ml-4 flex w-[41px] items-center justify-between text-[#111]">
          {zoom}%
          <Caret className="text-[#777]" />
        </button>
        <IconButton label="全屏" className="ml-4 w-[18px]">
          <Ico size={17}><path d="M2 7V2H7M13 2H18V7M18 13V18H13M7 18H2V13" /></Ico>
        </IconButton>
        <IconButton label="适合宽度" className="ml-[6px] w-[18px]">
          <Ico size={18}><rect x="1.5" y="1.5" width="17" height="17" /><path d="M5 10H15" strokeWidth="1.6" /><path d="M8 7L4.5 10L8 13ZM12 7L15.5 10L12 13Z" fill="currentColor" stroke="none" /></Ico>
        </IconButton>
      </div>
    </footer>
  );
}

export default function App() {
  return (
    <div className="flex h-screen w-full -scale-x-100 flex-col overflow-hidden bg-[#f5f5f5] font-['Noto_Sans','Noto_Sans_CJK_SC',sans-serif]">
      <TitleBar />
      <div className="flex min-h-0 flex-1 flex-col border-x-2 border-b-2 border-[#e0e0e0]">
        <Ribbon />
        <div className="flex min-h-0 flex-1">
          <SymbolPanel />
          <Workspace />
          <SideBar />
        </div>
        <StatusBar />
      </div>
    </div>
  );
}
